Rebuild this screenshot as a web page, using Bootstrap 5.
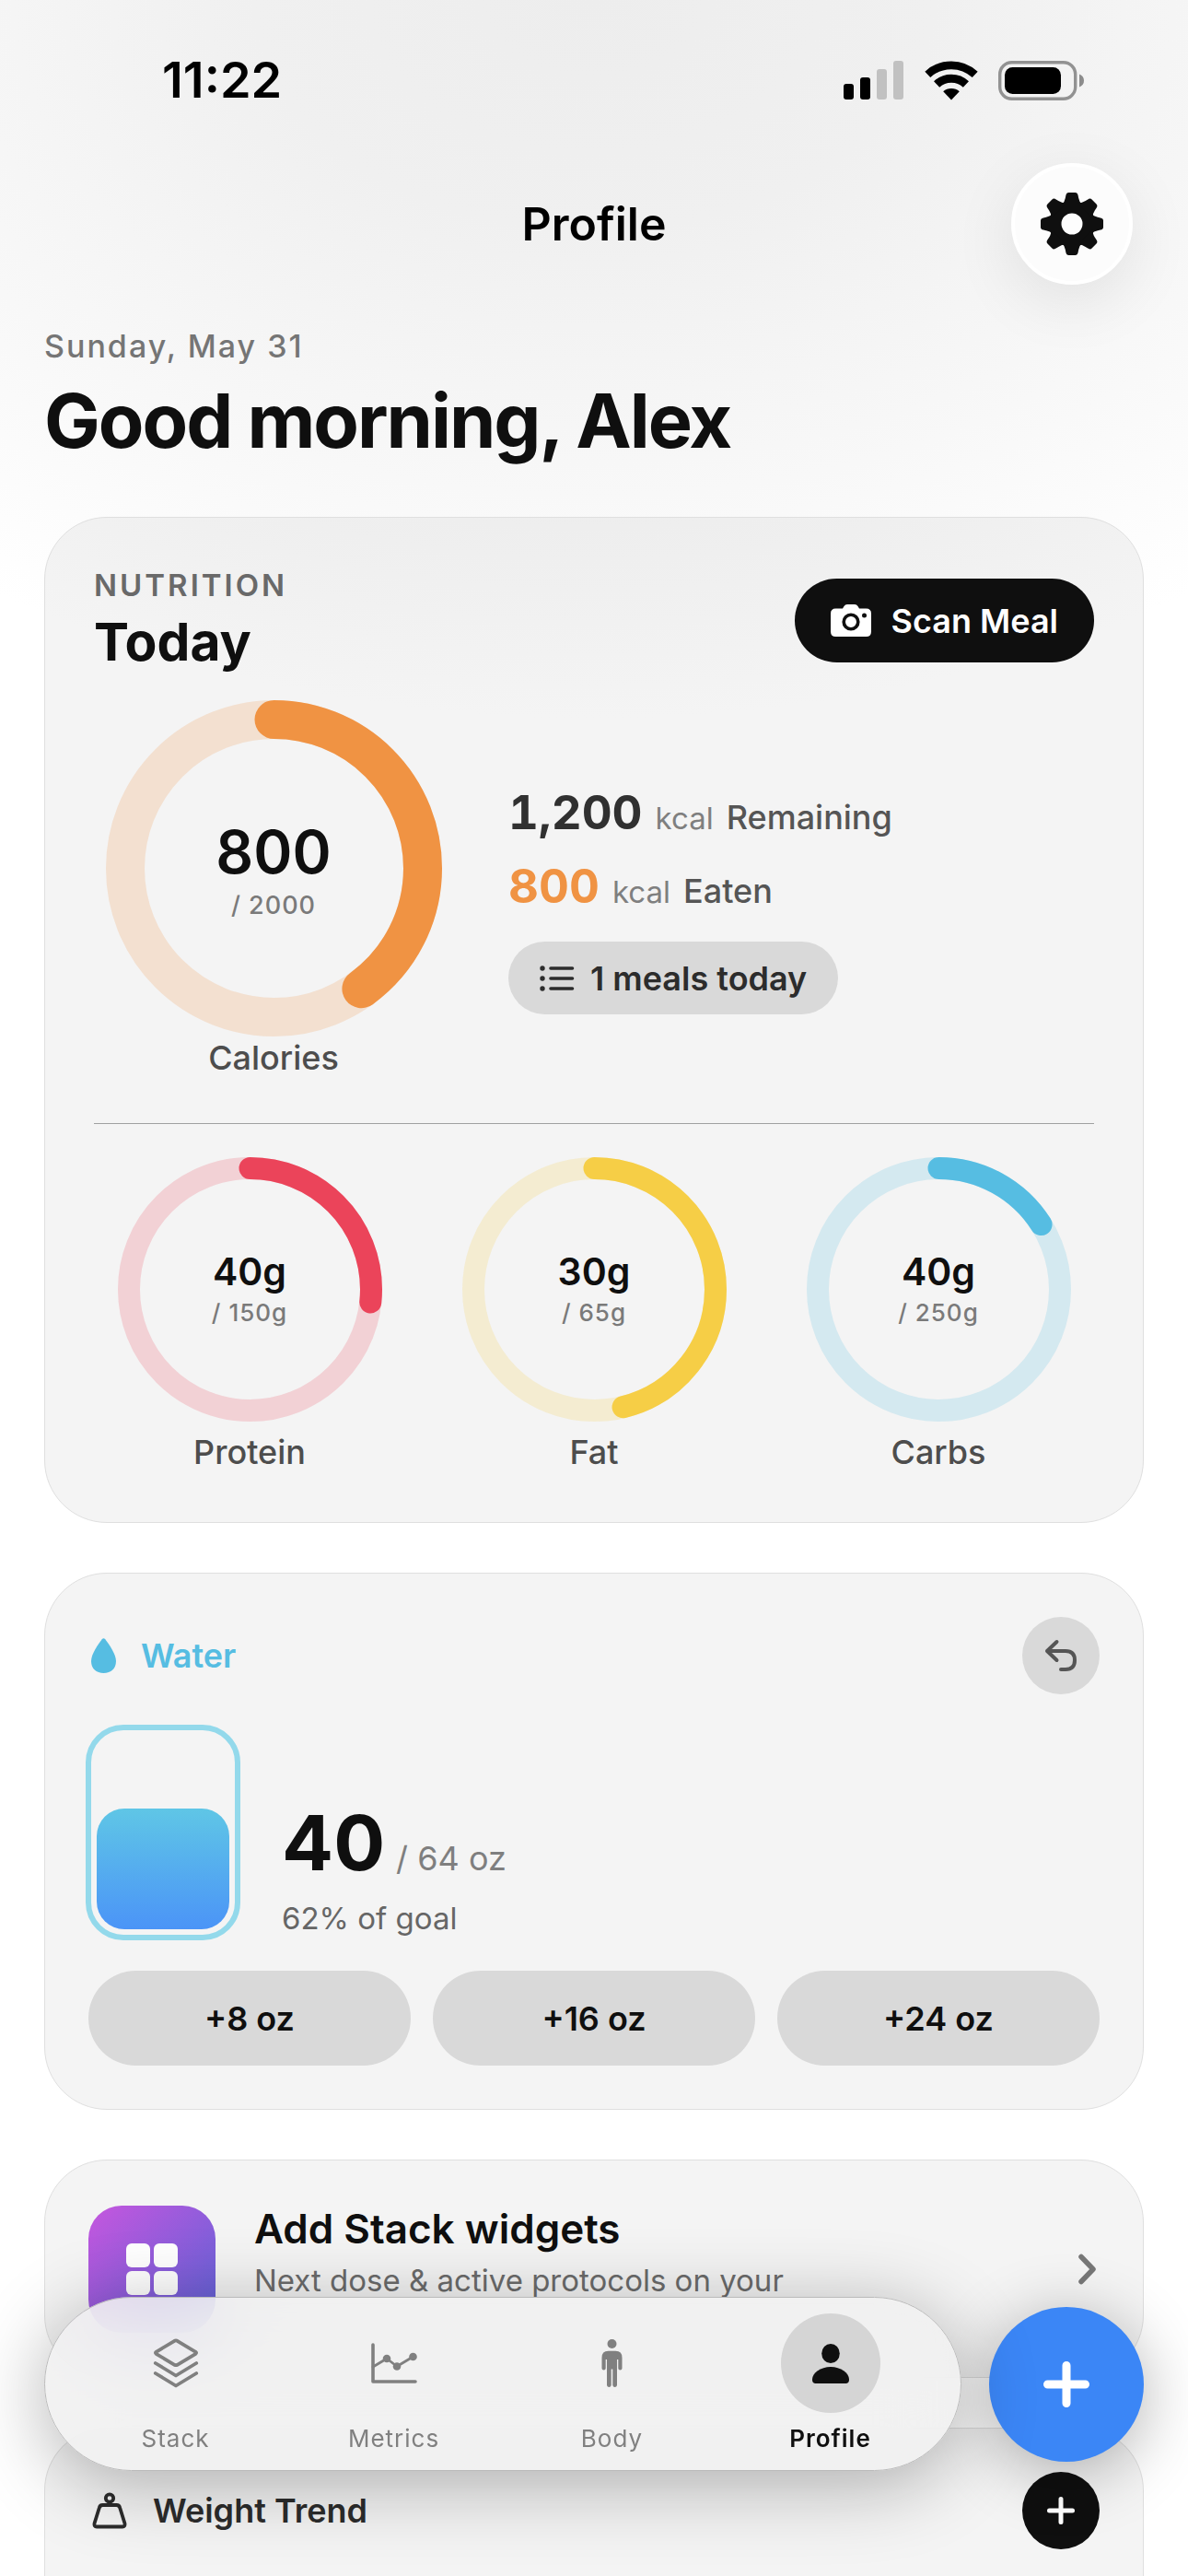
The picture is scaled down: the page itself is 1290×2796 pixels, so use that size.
<!DOCTYPE html>
<html lang="en">
<head>
<meta charset="utf-8">
<meta name="viewport" content="width=device-width, initial-scale=1">
<title>Profile</title>
<link href="https://cdn.jsdelivr.net/npm/bootstrap@5.3.0/dist/css/bootstrap.min.css" rel="stylesheet">
<style>
  :root {
    --ink: #0f0f0f;
    --ink-soft: #2c2c2c;
    --ink-mid: #4d4d4d;
    --ink-dim: #6b6b6b;
    --ink-faint: #7f7f7f;
    --pill: #d9d9d9;
    --orange: #f09343;
    --red: #eb445a;
    --yellow: #f6ce46;
    --sky: #56bde2;
    --blue: #3b86f6;
  }
  body {
    font-family: Inter, "Liberation Sans", sans-serif;
    font-size: 36px;
    line-height: 46px;
    color: var(--ink);
    background: #fff radial-gradient(ellipse 1150px 780px at 50% 0, #ededed 0%, #f0f0f0 32%, #f4f4f4 50%, #f8f8f8 69%, #fff 100%) no-repeat;
  }
  svg { display: block; flex: none; }
  .page { padding: 57px 48px 0; gap: 54px; overflow: hidden; }

  /* status bar and title bar */
  .status { height: 60px; padding: 0 64px 0 128px; font-size: 54px; color: #000; }
  .status-icons { gap: 22px; }
  .titlebar { display: grid; grid-template-columns: 1fr auto 1fr; align-items: center; margin-top: 60px; }
  .titlebar h1 { font-size: 50px; line-height: 60px; color: #000; }
  .round { display: flex; align-items: center; justify-content: center; border-radius: 50%; padding: 0; border: 0; flex: none; }
  .btn-gear { width: 132px; height: 132px; margin-right: 12px; background: #fcfcfc; border: 4px solid #fff; box-shadow: 0 18px 70px rgba(0,0,0,.09); }
  .btn-gear:hover { background: #fff; }
  .date { margin-top: 47px; font-size: 34px; line-height: 40px; letter-spacing: 2px; color: #757575; }
  .greeting { margin-top: 11px; font-size: 81px; line-height: 100px; letter-spacing: -2px; }

  /* cards */
  .panel { background: rgba(0,0,0,.045); border: 1px solid #dfdfdf; border-radius: 68px; padding: 47px; }
  .panel-roomy { padding: 53px; }
  .panel-open { border-bottom: 0; border-radius: 68px 68px 0 0; }
  .panel-title { font-size: 36px; line-height: 46px; font-weight: 600; }
  .eyebrow { font-size: 33px; line-height: 40px; letter-spacing: 3px; color: #696969; }
  .today { margin-top: 7px; font-size: 57px; line-height: 70px; }
  .btn-scan { display: flex; align-items: center; gap: 22px; height: 91px; padding: 0 38px; font-size: 36px; background: var(--ink); color: #fff; }
  .btn-scan:hover, .btn-add:hover { background: #333; color: #fff; }

  /* progress rings */
  .ring { position: relative; }
  .ring svg { transform: rotate(-90deg); }
  .ring circle { fill: none; stroke: currentColor; }
  .ring .track { opacity: .2; }
  .ring .value { stroke-linecap: round; }
  .ring-text { position: absolute; inset: 0; color: var(--ink); }
  .ring-label { font-weight: 500; color: var(--ink-mid); }
  .ring-col { width: 390px; }
  .big-num { font-size: 64px; line-height: 80px; }
  .big-of { font-size: 27px; line-height: 36px; color: #7a7a7a; letter-spacing: 1px; }
  .small-num { font-size: 41px; line-height: 50px; }
  .small-of { font-size: 26px; line-height: 40px; color: #7a7a7a; letter-spacing: 1px; }
  .t-orange { color: var(--orange); }
  .t-red { color: var(--red); }
  .t-yellow { color: var(--yellow); }
  .t-sky { color: var(--sky); }
  .calorie-row { gap: 60px; margin-top: 28px; }
  .calorie-facts { padding-top: 20px; }
  .fact { line-height: 50px; margin-bottom: 16px; gap: 14px; }
  .fact b { font-size: 51px; line-height: 64px; font-weight: 700; font-variant-numeric: tabular-nums; color: #303030; }
  .fact .t-orange { color: var(--orange); }
  .fact .unit { font-size: 33px; color: var(--ink-faint); }
  .fact .what { font-weight: 500; color: #555; }
  .btn-meals { display: inline-flex; align-items: center; gap: 17px; height: 79px; padding: 0 33px; margin-top: 12px; font-size: 36px; background: var(--pill); color: var(--ink-soft); }
  .rule { margin: 48px 0 36px; border-top: 1px solid #9fa0a0; opacity: 1; }
  .macros { gap: 36px; }
  .macros .ring-label { margin-top: 10px; }

  /* water */
  .water-head { height: 84px; gap: 25px; }
  .icon-slot { width: 32px; }
  .btn-undo { width: 84px; height: 84px; background: var(--pill); color: #555; }
  .water-row { gap: 48px; margin: 36px 0; }
  .glass { width: 162px; height: 228px; padding: 9px; border-radius: 38px; outline: 6px solid #93d9eb; outline-offset: -3px; }
  .glass-fill { border-radius: 30px; background: linear-gradient(#5fc6e6, #4b94f7); }
  .water-amount { gap: 12px; }
  .water-num { font-size: 83px; line-height: 98px; }
  .water-of { font-size: 36px; color: var(--ink-faint); }
  .water-pct { margin-top: 12px; font-size: 33px; line-height: 42px; color: #666; }
  .quick { gap: 24px; }
  .quick .btn { height: 103px; font-size: 36px; background: var(--pill); color: var(--ink); }
  .quick .btn:hover { background: #cfcfcf; }

  /* widget promo */
  .promo { min-height: 141px; gap: 42px; }
  .promo-tile { width: 138px; height: 138px; border-radius: 36px; background: linear-gradient(135deg, #c656de, #5a64d8); }
  .promo-title { font-size: 44px; line-height: 54px; }
  .promo-sub { margin-top: 9px; font-size: 33px; line-height: 40px; color: var(--ink-dim); }

  .btn-add { width: 84px; height: 84px; background: var(--ink); color: #fff; }
  .trend-head { gap: 28px; color: var(--ink-soft); }

  /* floating tab bar */
  .dock { position: fixed; left: 48px; right: 48px; bottom: 114px; gap: 30px; }
  .tabs { padding: 17px 23px; border-radius: 95px; border: 1px solid #bababa; background: rgba(240,240,240,.84); backdrop-filter: blur(40px); box-shadow: 0 14px 84px rgba(0,0,0,.3); }
  .tab { display: flex; flex-direction: column; align-items: center; gap: 11px; font-size: 26px; line-height: 34px; letter-spacing: 1px; color: #808080; text-decoration: none; }
  .tab-icon { width: 108px; height: 108px; }
  .tab.active { color: var(--ink); font-weight: 600; }
  .tab.active .tab-icon { background: #d5d5d5; }
  .btn-fab { width: 168px; height: 168px; background: var(--blue); color: #fff; box-shadow: 0 12px 70px rgba(0,0,0,.3); }
  .btn-fab:hover { background: #2f78e6; color: #fff; }
</style>
</head>
<body>
<main class="page d-flex flex-column min-vh-100">
  <header>
    <div class="status d-flex justify-content-between align-items-center fw-semibold">
      <span>11:22</span>
      <div class="status-icons d-flex align-items-center">
        <svg width="66" height="42" viewBox="0 0 66 42"><rect x="0" y="25" width="11" height="17" rx="3"/><rect x="18" y="18" width="11" height="24" rx="3"/><rect x="36" y="9" width="11" height="33" rx="3" fill="#c1c1c1"/><rect x="54" y="0" width="11" height="42" rx="3" fill="#c1c1c1"/></svg>
        <svg width="58" height="43" viewBox="0 0 58 43"><g fill="none" stroke="#000"><path stroke-width="8.7" d="M3.3 14.9A37.7 37.7 0 0 1 54.7 14.9"/><path stroke-width="9" d="M13.1 25.5A23.3 23.3 0 0 1 44.9 25.5"/></g><path d="M29 42.5L20.2 33.3A13.3 13.3 0 0 1 37.8 33.3Z"/></svg>
        <svg width="94" height="43" viewBox="0 0 94 43"><rect x="1.7" y="1.7" width="82" height="39.6" rx="13" fill="none" stroke="#929292" stroke-width="3.4"/><rect x="7" y="7" width="61" height="29" rx="8.5"/><path d="M88 14.5Q93 16.5 93 21.5Q93 26.5 88 28.5Z" fill="#8c8c8c"/></svg>
      </div>
    </div>
    <div class="titlebar">
      <span></span>
      <h1 class="m-0 fw-semibold">Profile</h1>
      <button type="button" class="btn round btn-gear ms-auto" aria-label="Settings">
        <svg width="68" height="68" viewBox="-34 -34 68 68" fill="#0f0f0f"><defs><path id="tooth" d="M-11-20Q-8-24-7.2-28L-6.6-31Q-6-34-3.5-34H3.5Q6-34 6.6-31L7.2-28Q8-24 11-20Z"/></defs><circle r="25"/><use href="#tooth"/><use href="#tooth" transform="rotate(45)"/><use href="#tooth" transform="rotate(90)"/><use href="#tooth" transform="rotate(135)"/><use href="#tooth" transform="rotate(180)"/><use href="#tooth" transform="rotate(225)"/><use href="#tooth" transform="rotate(270)"/><use href="#tooth" transform="rotate(315)"/><circle r="11.5" fill="#fdfdfd"/></svg>
      </button>
    </div>
    <p class="date mb-0 fw-medium">Sunday, May 31</p>
    <h2 class="greeting mb-0 fw-bold">Good morning, Alex</h2>
  </header>

  <section class="panel panel-roomy">
    <div class="d-flex justify-content-between align-items-center">
      <div>
        <p class="eyebrow mb-0 fw-semibold">NUTRITION</p>
        <h3 class="today mb-0 fw-bold">Today</h3>
      </div>
      <button type="button" class="btn btn-scan rounded-pill fw-semibold">
        <svg width="44" height="35" viewBox="0 0 44 35"><path fill="#fff" d="M13 4.5L14.500 2Q15.700 0 18 0H26Q28.300 0 29.500 2L31 4.500H38.500Q44 4.500 44 10V29.500Q44 35 38.500 35H5.500Q0 35 0 29.500V10Q0 4.500 5.500 4.500Z"/><circle cx="22" cy="19" r="7.8" fill="#fff" stroke="#0f0f0f" stroke-width="3.6"/><circle cx="36.5" cy="12" r="2.5" fill="#0f0f0f"/></svg>
        Scan Meal
      </button>
    </div>

    <div class="calorie-row d-flex align-items-center">
      <div class="ring-col d-flex flex-column align-items-center">
        <div class="ring t-orange">
          <svg width="365" height="365" viewBox="0 0 365 365"><circle class="track" cx="182.5" cy="182.5" r="161.5" stroke-width="42"/><circle class="value" cx="182.5" cy="182.5" r="161.5" stroke-width="42" pathLength="100" stroke-dasharray="40 100"/></svg>
          <div class="ring-text d-flex flex-column align-items-center justify-content-center">
            <span class="big-num fw-semibold">800</span>
            <span class="big-of fw-medium">/ 2000</span>
          </div>
        </div>
        <span class="ring-label">Calories</span>
      </div>
      <div class="calorie-facts">
        <div class="fact d-flex align-items-baseline"><b>1,200</b><span class="unit">kcal</span><span class="what">Remaining</span></div>
        <div class="fact d-flex align-items-baseline"><b class="t-orange">800</b><span class="unit">kcal</span><span class="what">Eaten</span></div>
        <button type="button" class="btn btn-meals rounded-pill fw-semibold">
          <svg width="38" height="28" viewBox="0 0 38 28"><g stroke="#2c2c2c" stroke-width="3.6" stroke-linecap="round"><path d="M12 3H35.5M12 14H35.5M12 25H35.5"/></g><g fill="#2c2c2c"><circle cx="3" cy="3" r="2.7"/><circle cx="3" cy="14" r="2.7"/><circle cx="3" cy="25" r="2.7"/></g></svg>
          1 meals today
        </button>
      </div>
    </div>

    <hr class="rule">

    <div class="macros d-flex">
      <div class="col d-flex flex-column align-items-center">
        <div class="ring t-red">
          <svg width="287" height="287" viewBox="0 0 287 287"><circle class="track" cx="143.5" cy="143.5" r="131.5" stroke-width="24"/><circle class="value" cx="143.5" cy="143.5" r="131.5" stroke-width="24" pathLength="100" stroke-dasharray="26.7 100"/></svg>
          <div class="ring-text d-flex flex-column align-items-center justify-content-center">
            <span class="small-num fw-semibold">40g</span>
            <span class="small-of fw-medium">/ 150g</span>
          </div>
        </div>
        <span class="ring-label">Protein</span>
      </div>
      <div class="col d-flex flex-column align-items-center">
        <div class="ring t-yellow">
          <svg width="287" height="287" viewBox="0 0 287 287"><circle class="track" cx="143.5" cy="143.5" r="131.5" stroke-width="24"/><circle class="value" cx="143.5" cy="143.5" r="131.5" stroke-width="24" pathLength="100" stroke-dasharray="46.2 100"/></svg>
          <div class="ring-text d-flex flex-column align-items-center justify-content-center">
            <span class="small-num fw-semibold">30g</span>
            <span class="small-of fw-medium">/ 65g</span>
          </div>
        </div>
        <span class="ring-label">Fat</span>
      </div>
      <div class="col d-flex flex-column align-items-center">
        <div class="ring t-sky">
          <svg width="287" height="287" viewBox="0 0 287 287"><circle class="track" cx="143.5" cy="143.5" r="131.5" stroke-width="24"/><circle class="value" cx="143.5" cy="143.5" r="131.5" stroke-width="24" pathLength="100" stroke-dasharray="16 100"/></svg>
          <div class="ring-text d-flex flex-column align-items-center justify-content-center">
            <span class="small-num fw-semibold">40g</span>
            <span class="small-of fw-medium">/ 250g</span>
          </div>
        </div>
        <span class="ring-label">Carbs</span>
      </div>
    </div>
  </section>

  <section class="panel">
    <div class="water-head d-flex align-items-center t-sky">
      <span class="icon-slot d-flex justify-content-center"><svg width="27" height="38" viewBox="0 0 27 38" fill="currentColor"><path d="M11.8 1.2Q13.5-.8 15.2 1.2C20 7.5 27 17.5 27 25C27 33 21.5 38 13.5 38C5.5 38 0 33 0 25C0 17.5 7 7.5 11.8 1.2Z"/></svg></span>
      <h3 class="panel-title m-0">Water</h3>
      <button type="button" class="btn round btn-undo ms-auto" aria-label="Undo">
        <svg width="36" height="36" viewBox="0 0 36 36" fill="none" stroke="currentColor" stroke-width="4" stroke-linecap="round" stroke-linejoin="round"><path d="M13.5 3L3 13L13.5 23M3 13H23Q33 13 33 23T23 33H18"/></svg>
      </button>
    </div>
    <div class="water-row d-flex align-items-end">
      <div class="glass d-flex align-items-end" role="img" aria-label="62% full"><div class="glass-fill w-100" style="height:62.5%"></div></div>
      <div>
        <div class="water-amount d-flex align-items-baseline"><span class="water-num fw-bold">40</span><span class="water-of">/ 64 oz</span></div>
        <p class="water-pct mb-0">62% of goal</p>
      </div>
    </div>
    <div class="quick d-flex">
      <button type="button" class="btn col rounded-pill fw-semibold">+8 oz</button>
      <button type="button" class="btn col rounded-pill fw-semibold">+16 oz</button>
      <button type="button" class="btn col rounded-pill fw-semibold">+24 oz</button>
    </div>
  </section>

  <section class="panel">
    <a href="#" class="promo d-flex align-items-center text-reset text-decoration-none">
      <span class="promo-tile d-flex align-items-center justify-content-center flex-shrink-0"><svg width="56" height="56" viewBox="0 0 56 56" fill="#fff"><rect width="26" height="26" rx="6"/><rect x="30" width="26" height="26" rx="6"/><rect y="30" width="26" height="26" rx="6"/><rect x="30" y="30" width="26" height="26" rx="6"/></svg></span>
      <span class="align-self-start flex-grow-1">
        <span class="promo-title d-block fw-semibold">Add Stack widgets</span>
        <span class="promo-sub d-block">Next dose &amp; active protocols on your</span>
      </span>
      <svg width="24" height="34" viewBox="0 0 24 34" fill="none" stroke="#777" stroke-width="5.5" stroke-linecap="round" stroke-linejoin="round"><path d="M4 3.5L17 17L4 30.5"/></svg>
    </a>
  </section>

  <section class="panel panel-open flex-grow-1">
    <div class="trend-head d-flex align-items-center">
      <svg class="ms-1" width="38" height="40" viewBox="0 0 38 40" fill="none" stroke="currentColor" stroke-width="3.8" stroke-linejoin="round"><circle cx="19" cy="6.5" r="4.2"/><path d="M19 10.5V14M11.5 14H26.5Q29.5 14 30.2 17L35.5 34Q36 37.5 33 37.5H5Q2 37.5 2.500 34L7.800 17Q8.500 14 11.500 14Z"/></svg>
      <h3 class="panel-title m-0">Weight Trend</h3>
      <button type="button" class="btn round btn-add ms-auto" aria-label="Add weight">
        <svg width="30" height="30" viewBox="0 0 30 30" stroke="currentColor" stroke-width="5" stroke-linecap="round"><path d="M15 2.5V27.5M2.5 15H27.5"/></svg>
      </button>
    </div>
  </section>
</main>

<div class="dock d-flex align-items-center">
  <nav class="tabs d-flex flex-grow-1" aria-label="Main">
    <a class="tab col" href="#">
      <span class="tab-icon round"><svg width="50" height="54" viewBox="0 0 50 54" fill="none" stroke="currentColor" stroke-width="3.8" stroke-linecap="round" stroke-linejoin="round"><path d="M23.5 2.8Q25 2 26.5 2.8L46.5 14.8Q47.8 15.8 46.5 16.8L26.5 28.8Q25 29.6 23.5 28.8L3.5 16.8Q2.2 15.8 3.5 14.8Z"/><path d="M2.8 27L25 40.5L47.2 27M2.8 38L25 51.5L47.2 38"/></svg></span>
      Stack
    </a>
    <a class="tab col" href="#">
      <span class="tab-icon round"><svg width="50" height="44" viewBox="0 0 50 44" fill="none" stroke="currentColor" stroke-width="3.6" stroke-linecap="round" stroke-linejoin="round"><path d="M2 2V42H48"/><path stroke-width="2.8" d="M2 26L17 17L28 25.5L45.5 15"/><g fill="currentColor" stroke="none"><circle cx="17" cy="17" r="4.3"/><circle cx="28" cy="25.5" r="4.3"/><circle cx="45.5" cy="15" r="4.3"/></g></svg></span>
      Metrics
    </a>
    <a class="tab col" href="#">
      <span class="tab-icon round"><svg width="23" height="52" viewBox="0 0 23 52" fill="currentColor"><circle cx="11.5" cy="5" r="5"/><path d="M7.5 12.8H15.5Q22.5 12.8 22.5 20V31.5A2.1 2.1 0 0 1 18.3 31.5V22H17V50A2.4 2.4 0 0 1 12.3 50V32.5H10.7V50A2.4 2.4 0 0 1 6 50V22H4.7V31.5A2.1 2.1 0 0 1 .5 31.5V20Q.5 12.8 7.5 12.8Z"/></svg></span>
      Body
    </a>
    <a class="tab col active" href="#" aria-current="page">
      <span class="tab-icon round"><svg width="40" height="43" viewBox="0 0 40 43" fill="currentColor"><ellipse cx="20" cy="10.5" rx="9.8" ry="10.5"/><path d="M20 25C31 25 40 31.5 40 38.5C40 42 38.5 43 36 43H4C1.5 43 0 42 0 38.5C0 31.5 9 25 20 25Z"/></svg></span>
      Profile
    </a>
  </nav>
  <button type="button" class="btn round btn-fab" aria-label="Add">
    <svg width="50" height="50" viewBox="0 0 50 50" stroke="currentColor" stroke-width="9" stroke-linecap="round"><path d="M25 4.5V45.5M4.5 25H45.5"/></svg>
  </button>
</div>
<script src="https://cdn.jsdelivr.net/npm/bootstrap@5.3.0/dist/js/bootstrap.bundle.min.js"></script>
</body>
</html>
